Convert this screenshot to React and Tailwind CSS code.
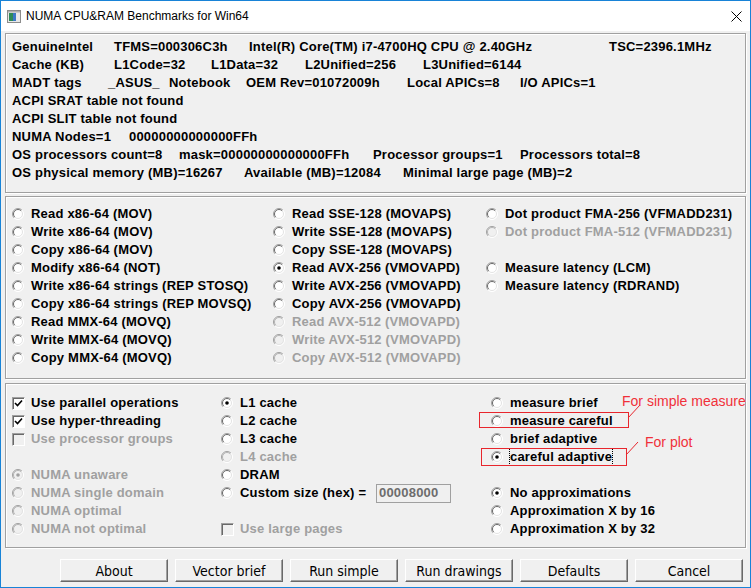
import React from "react";

const Radio = ({ checked, disabled }) => (
  <svg width="12" height="12" viewBox="0 0 12 12" className="shrink-0">
    <circle cx="6" cy="6" r="5.5" fill={disabled ? "#f0f0f0" : "#ffffff"} />
    <path d="M9.9 2.1 A5.5 5.5 0 0 0 2.1 9.9" fill="none" stroke="#a0a0a0" strokeWidth="1" />
    <path d="M9.2 2.8 A4.5 4.5 0 0 0 2.8 9.2" fill="none" stroke={disabled ? "#b4b4b4" : "#696969"} strokeWidth="1" />
    <path d="M9.9 2.1 A5.5 5.5 0 0 1 2.1 9.9" fill="none" stroke="#ffffff" strokeWidth="1" />
    <path d="M9.2 2.8 A4.5 4.5 0 0 1 2.8 9.2" fill="none" stroke="#e3e3e3" strokeWidth="1" />
    {checked && <circle cx="6" cy="6" r="1.8" fill={disabled ? "#a0a0a0" : "#000000"} />}
  </svg>
);

const Check = ({ checked, disabled }) => (
  <div
    className={`w-[13px] h-[13px] shrink-0 border border-t-[#a0a0a0] border-l-[#a0a0a0] border-r-white border-b-white shadow-[inset_1px_1px_0_#696969] flex items-center justify-center ${
      disabled ? "bg-[#f0f0f0]" : "bg-white"
    }`}
  >
    {checked && (
      <svg width="9" height="9" viewBox="0 0 9 9">
        <path d="M1 4 L3.5 6.5 L8 1.5" fill="none" stroke="#000" strokeWidth="1.6" />
      </svg>
    )}
  </div>
);

const Opt = ({ label, checked, disabled, box, focus }) => (
  <div className="h-[18px] flex items-center">
    <div className="w-[19px] flex items-center">
      {box ? <Check checked={checked} disabled={disabled} /> : <Radio checked={checked} disabled={disabled} />}
    </div>
    {label && (
      <span
        className={`whitespace-nowrap leading-[16px] ${disabled ? "text-[#a0a0a0]" : "text-black"} ${
          focus ? "outline-1 outline-dotted outline-black" : ""
        }`}
      >
        {label}
      </span>
    )}
  </div>
);

const Empty = () => <div className="h-[18px]" />;

const Line = ({ cols, widths }) => (
  <div className="h-[18px] flex items-center whitespace-nowrap">
    {cols.map((c, i) => (
      <span key={i} style={widths[i] ? { width: widths[i] } : undefined} className="shrink-0">
        {c}
      </span>
    ))}
  </div>
);

const panel = "border border-[#a0a0a0] shadow-[inset_1px_1px_0_#fff,1px_1px_0_#fff]";

const buttons = ["About", "Vector brief", "Run simple", "Run drawings", "Defaults", "Cancel"];

export default function App() {
  return (
    <div className="relative w-[751px] h-[588px] border border-[#1883d7] bg-[#f0f0f0] flex flex-col font-['Liberation_Sans',Arial,sans-serif] font-bold text-[13px] tracking-[0.2px] text-black overflow-hidden">
      {/* title bar */}
      <div className="h-[30px] bg-white flex items-center shrink-0 tracking-normal">
        <svg width="14" height="13" viewBox="0 0 14 13" className="ml-[6px]">
          <rect x="0.5" y="0.5" width="13" height="12" fill="#e8e8e8" stroke="#8c8c8c" />
          <rect x="2" y="3" width="4" height="8" fill="#2e8b57" />
          <rect x="6" y="3" width="3" height="8" fill="#3c78c8" />
          <rect x="1" y="1" width="12" height="1.5" fill="#b0b0b0" />
        </svg>
        <span className="ml-[5px] font-normal text-[12px] font-['Liberation_Sans',Arial,sans-serif]">
          NUMA CPU&amp;RAM Benchmarks for Win64
        </span>
        <svg width="11" height="11" viewBox="0 0 11 11" className="ml-auto mr-[8px]">
          <path d="M0.5 0.5 L10.5 10.5 M10.5 0.5 L0.5 10.5" stroke="#000" strokeWidth="1" />
        </svg>
      </div>

      <div className="flex flex-col px-[4px] pt-[2px]">
        {/* system info */}
        <div className={`${panel} h-[160px] pl-[6px] pt-[4px]`}>
          <Line cols={["GenuineIntel", "TFMS=000306C3h", "Intel(R) Core(TM) i7-4700HQ CPU @ 2.40GHz", "TSC=2396.1MHz"]} widths={[102, 135, 360]} />
          <Line cols={["Cache (KB)", "L1Code=32", "L1Data=32", "L2Unified=256", "L3Unified=6144"]} widths={[102, 97, 94, 118]} />
          <Line cols={["MADT tags", "_ASUS_", "Notebook", "OEM Rev=01072009h", "Local APICs=8", "I/O APICs=1"]} widths={[96, 61, 77, 161, 113]} />
          <Line cols={["ACPI SRAT table not found"]} widths={[]} />
          <Line cols={["ACPI SLIT table not found"]} widths={[]} />
          <Line cols={["NUMA Nodes=1", "00000000000000FFh"]} widths={[117]} />
          <Line cols={["OS processors count=8", "mask=00000000000000FFh", "Processor groups=1", "Processors total=8"]} widths={[167, 194, 147]} />
          <Line cols={["OS physical memory (MB)=16267", "Available (MB)=12084", "Minimal large page (MB)=2"]} widths={[232, 159]} />
        </div>

        {/* method selection */}
        <div className={`${panel} h-[183px] mt-[3px] pl-[6px] pt-[8px] flex`}>
          <div className="w-[261px] flex flex-col">
            <Opt label="Read x86-64 (MOV)" />
            <Opt label="Write x86-64 (MOV)" />
            <Opt label="Copy x86-64 (MOV)" />
            <Opt label="Modify x86-64 (NOT)" />
            <Opt label="Write x86-64 strings (REP STOSQ)" />
            <Opt label="Copy x86-64 strings (REP MOVSQ)" />
            <Opt label="Read MMX-64 (MOVQ)" />
            <Opt label="Write MMX-64 (MOVQ)" />
            <Opt label="Copy MMX-64 (MOVQ)" />
          </div>
          <div className="w-[213px] flex flex-col">
            <Opt label="Read SSE-128 (MOVAPS)" />
            <Opt label="Write SSE-128 (MOVAPS)" />
            <Opt label="Copy SSE-128 (MOVAPS)" />
            <Opt label="Read AVX-256 (VMOVAPD)" checked />
            <Opt label="Write AVX-256 (VMOVAPD)" />
            <Opt label="Copy AVX-256 (VMOVAPD)" />
            <Opt label="Read AVX-512 (VMOVAPD)" disabled />
            <Opt label="Write AVX-512 (VMOVAPD)" disabled />
            <Opt label="Copy AVX-512 (VMOVAPD)" disabled />
          </div>
          <div className="flex flex-col">
            <Opt label="Dot product FMA-256 (VFMADD231)" />
            <Opt label="Dot product FMA-512 (VFMADD231)" disabled />
            <Empty />
            <Opt label="Measure latency (LCM)" />
            <Opt label="Measure latency (RDRAND)" />
          </div>
        </div>

        {/* options */}
        <div className={`${panel} h-[165px] mt-[4px] pl-[6px] pt-[10px] flex`}>
          <div className="w-[209px] flex flex-col">
            <Opt box checked label="Use parallel operations" />
            <Opt box checked label="Use hyper-threading" />
            <Opt box disabled label="Use processor groups" />
            <Empty />
            <Opt checked disabled label="NUMA unaware" />
            <Opt disabled label="NUMA single domain" />
            <Opt disabled label="NUMA optimal" />
            <Opt disabled label="NUMA not optimal" />
          </div>
          <div className="w-[270px] flex flex-col">
            <Opt checked label="L1 cache" />
            <Opt label="L2 cache" />
            <Opt label="L3 cache" />
            <Opt disabled label="L4 cache" />
            <Opt label="DRAM" />
            <div className="h-[18px] flex items-center">
              <div className="w-[19px] flex items-center">
                <Radio />
              </div>
              <span className="w-[136px] whitespace-nowrap">Custom size (hex) =</span>
              <div className="w-[75px] h-[19px] border border-[#a0a0a0] bg-[#f0f0f0] text-[#6d6d6d] flex items-center pl-[2px]">
                00008000
              </div>
            </div>
            <Empty />
            <Opt box disabled label="Use large pages" />
          </div>
          <div className="flex flex-col">
            <Opt label="measure brief" />
            <Opt label="measure careful" />
            <Opt label="brief adaptive" />
            <Opt checked focus label="careful adaptive" />
            <Empty />
            <Opt checked label="No approximations" />
            <Opt label="Approximation X by 16" />
            <Opt label="Approximation X by 32" />
          </div>
        </div>

        {/* buttons */}
        <div className="flex gap-[7px] pl-[55px] mt-[11px]">
          {buttons.map((b) => (
            <button
              key={b}
              className="w-[108px] h-[23px] bg-[#f0f0f0] border border-t-white border-l-white border-r-[#696969] border-b-[#696969] shadow-[inset_-1px_-1px_0_#a0a0a0] font-normal tracking-normal text-[14px] font-['DejaVu_Sans_Condensed','Liberation_Sans',sans-serif] leading-none"
            >
              {b}
            </button>
          ))}
        </div>
      </div>

      {/* annotations */}
      <div className="absolute left-[478px] top-[411px] w-[150px] h-[16px] border border-[#e8262d]" />
      <div className="absolute left-[480px] top-[447px] w-[146px] h-[18px] border border-[#e8262d]" />
      <svg className="absolute left-0 top-0 pointer-events-none" width="751" height="588">
        <path d="M627 417 L639 404" stroke="#e8262d" strokeWidth="1" />
        <path d="M625 454 L637 441" stroke="#e8262d" strokeWidth="1" />
      </svg>
      <span className="absolute left-[621px] top-[390px] text-[14px] font-normal tracking-normal text-[#f0303a] whitespace-nowrap">
        For simple measure
      </span>
      <span className="absolute left-[644px] top-[431px] text-[14px] font-normal tracking-normal text-[#f0303a] whitespace-nowrap">
        For plot
      </span>
    </div>
  );
}
